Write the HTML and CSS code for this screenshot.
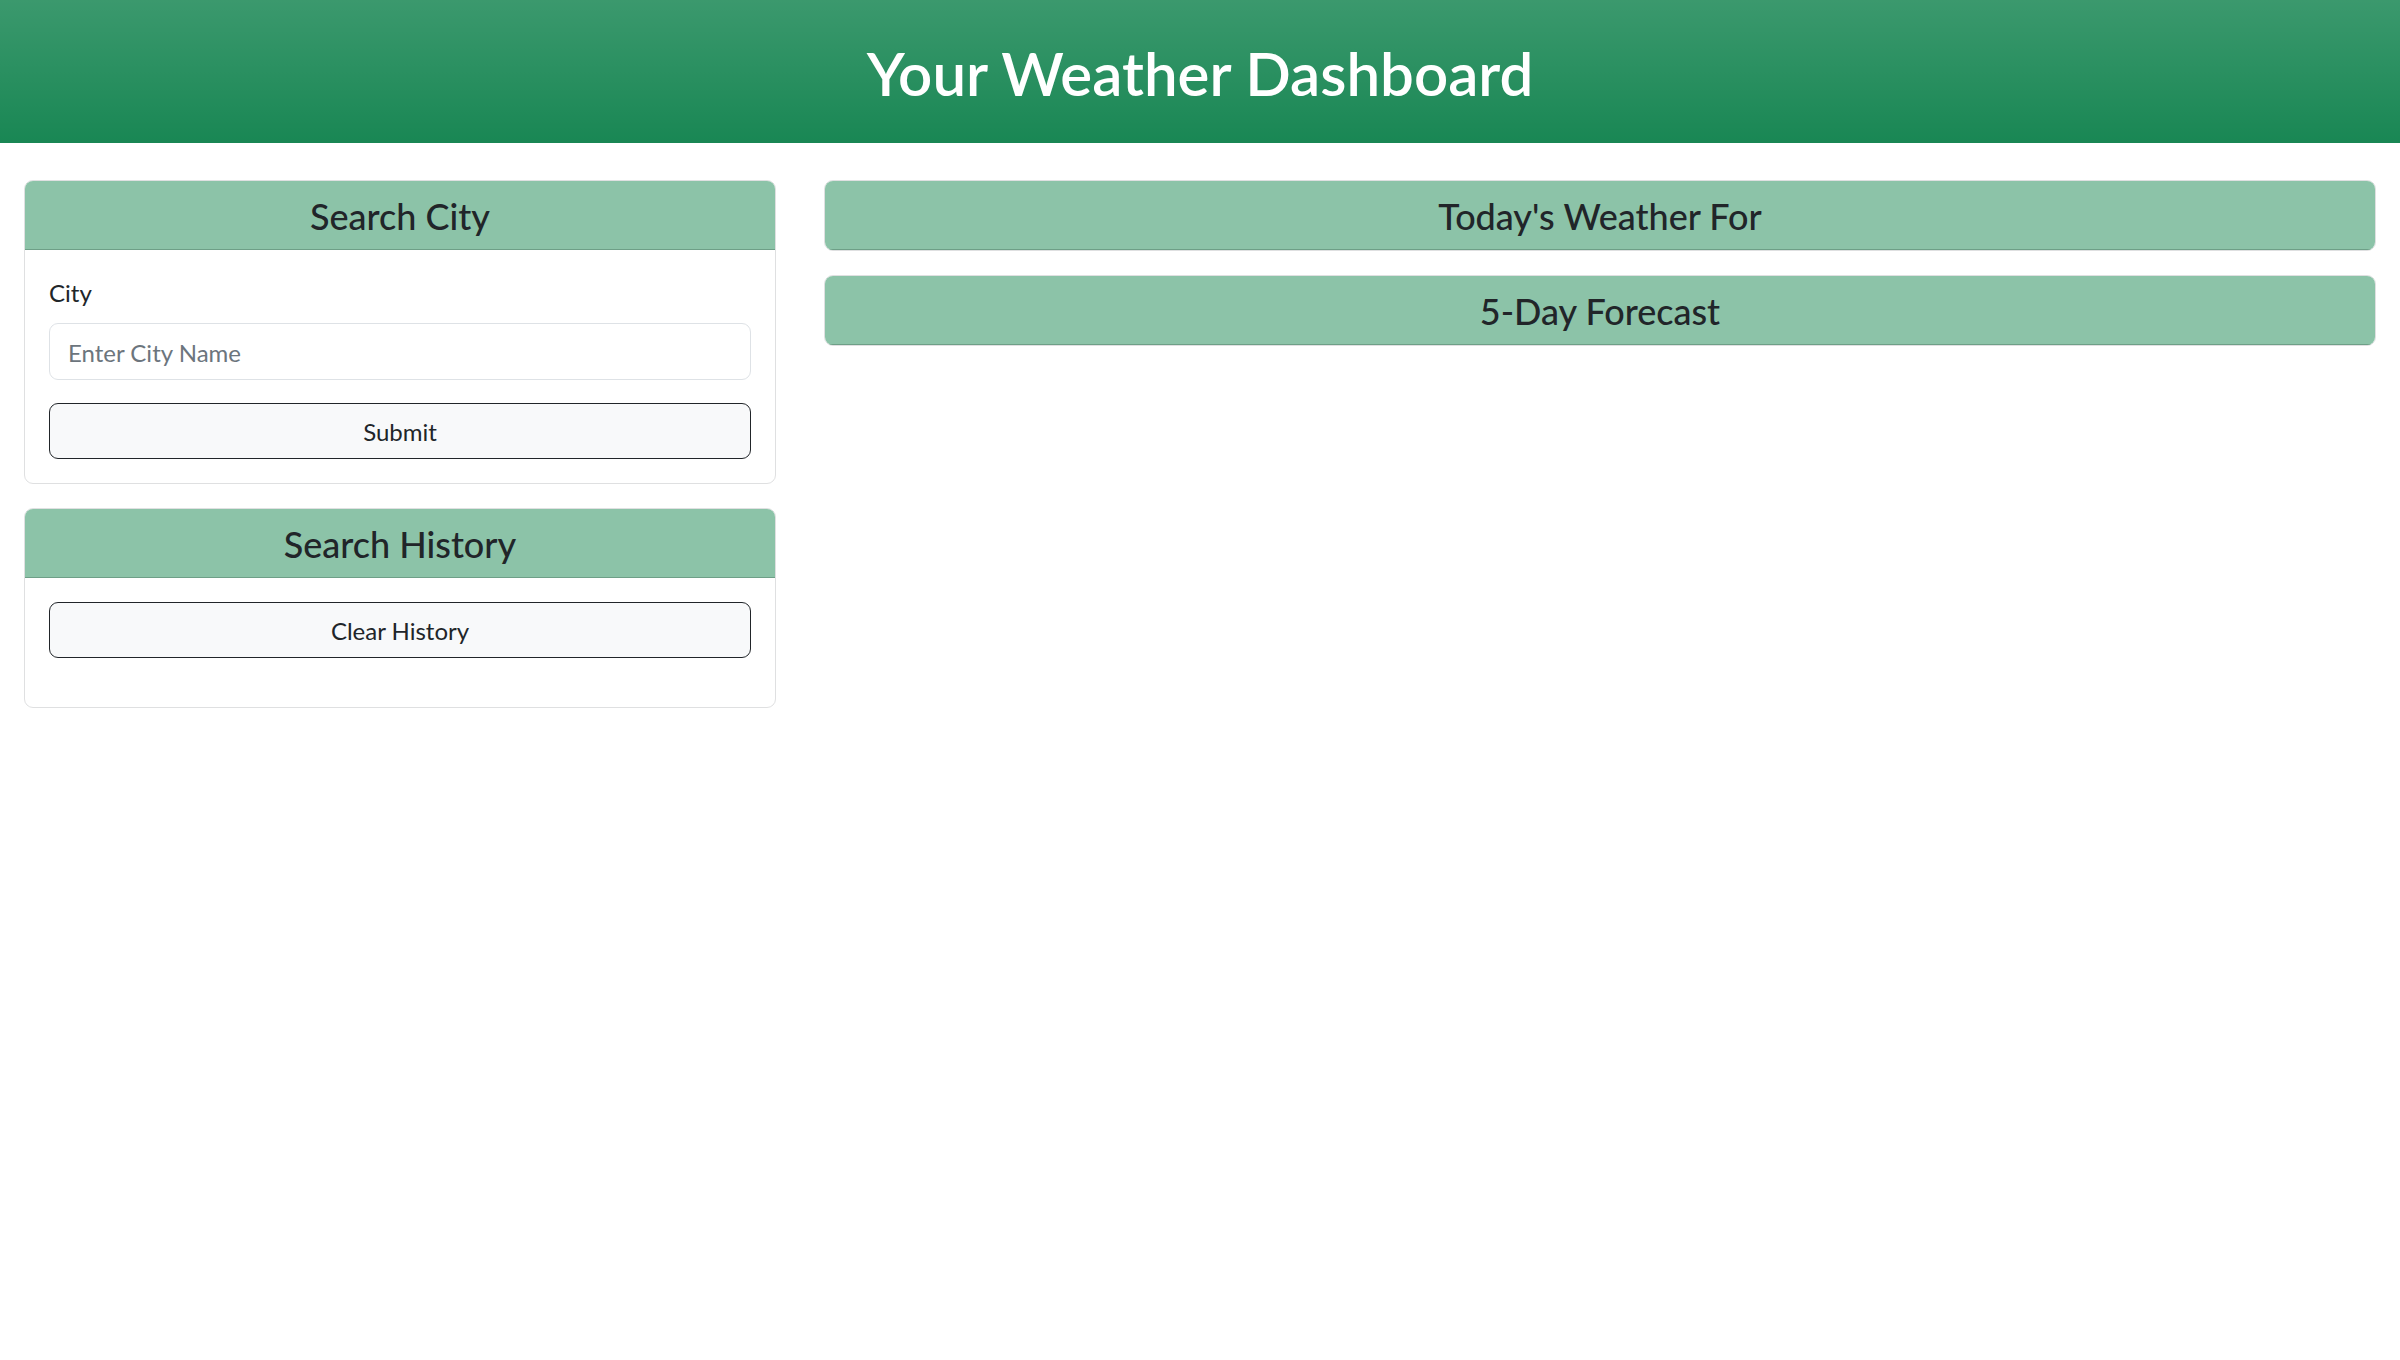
FILE: index.html
```html
<!DOCTYPE html>
<html lang="en">
<head>
<meta charset="utf-8">
<title>Weather Dashboard</title>
<link rel="stylesheet" href="styles.css">
</head>
<body>
<header class="site-header">
  <h1 class="site-title">Your Weather Dashboard</h1>
</header>
<main class="layout">
  <aside class="col col-side">
    <section class="card">
      <div class="card-header"><h3 class="card-title">Search City</h3></div>
      <div class="card-body">
        <label class="form-label" for="city">City</label>
        <input class="form-control" id="city" type="text" placeholder="Enter City Name">
        <button class="btn btn-submit" type="button">Submit</button>
      </div>
    </section>
    <section class="card card-history">
      <div class="card-header"><h3 class="card-title">Search History</h3></div>
      <div class="card-body history-body">
        <button class="btn" type="button">Clear History</button>
        <ul class="history-list"></ul>
      </div>
    </section>
  </aside>
  <section class="col col-main">
    <section class="card">
      <div class="card-header"><h3 class="card-title">Today's Weather For</h3></div>
    </section>
    <section class="card">
      <div class="card-header"><h3 class="card-title">5-Day Forecast</h3></div>
    </section>
  </section>
</main>
</body>
</html>
```
FILE: styles.css
```css
* { box-sizing: border-box; }
html, body { margin: 0; padding: 0; }
body {
  font-family: "Lato", "Open Sans", sans-serif;
  font-size: 24px;
  line-height: 1.5;
  color: #212529;
  background: #fff;
}
.site-header {
  height: 143px;
  background-color: #198754;
  background-image: linear-gradient(180deg, rgba(255,255,255,.15), rgba(255,255,255,0));
  display: flex;
  align-items: center;
  justify-content: center;
}
.site-title {
  margin: 0;
  padding-top: 3px;
  color: #fff;
  font-size: 60px;
  font-weight: 600;
  line-height: 1.2;
}
.layout {
  display: flex;
  padding-top: 37px;
}
.col { padding: 0 24px; display: flex; flex-direction: column; gap: 24px; }
.col-side { width: 33.3333%; }
.col-main { width: 66.6667%; }
.card {
  border: 1.5px solid #dfe0e1;
  border-radius: 9px;
  background: #fff;
  overflow: hidden;
}
.card-header {
  background: #8cc3a8;
  border-bottom: 1.5px solid #6e9f87;
  padding: 14px 24px 11px;
  text-align: center;
}
.card-title {
  margin: 0;
  font-size: 36px;
  font-weight: 500;
  line-height: 1.2;
  color: #212529;
}
.card-body { padding: 24px; display: flex; flex-direction: column; }
.form-label { margin-bottom: 12px; padding-top: 1px; }
.form-control {
  font: inherit;
  color: #212529;
  height: 57px;
  padding: 10px 18px 8px;
  border: 1.5px solid #dee2e6;
  border-radius: 9px;
  background: #fff;
}
.form-control::placeholder { color: #6c757d; }
.btn {
  font: inherit;
  color: #212529;
  height: 56px;
  padding: 10px 18px 8px;
  background: #f8f9fa;
  border: 1.5px solid #212529;
  border-radius: 9px;
  text-align: center;
}
.btn-submit { margin-top: 23px; }
.history-list { margin: 0 0 25px; padding: 0; list-style: none; }
```
